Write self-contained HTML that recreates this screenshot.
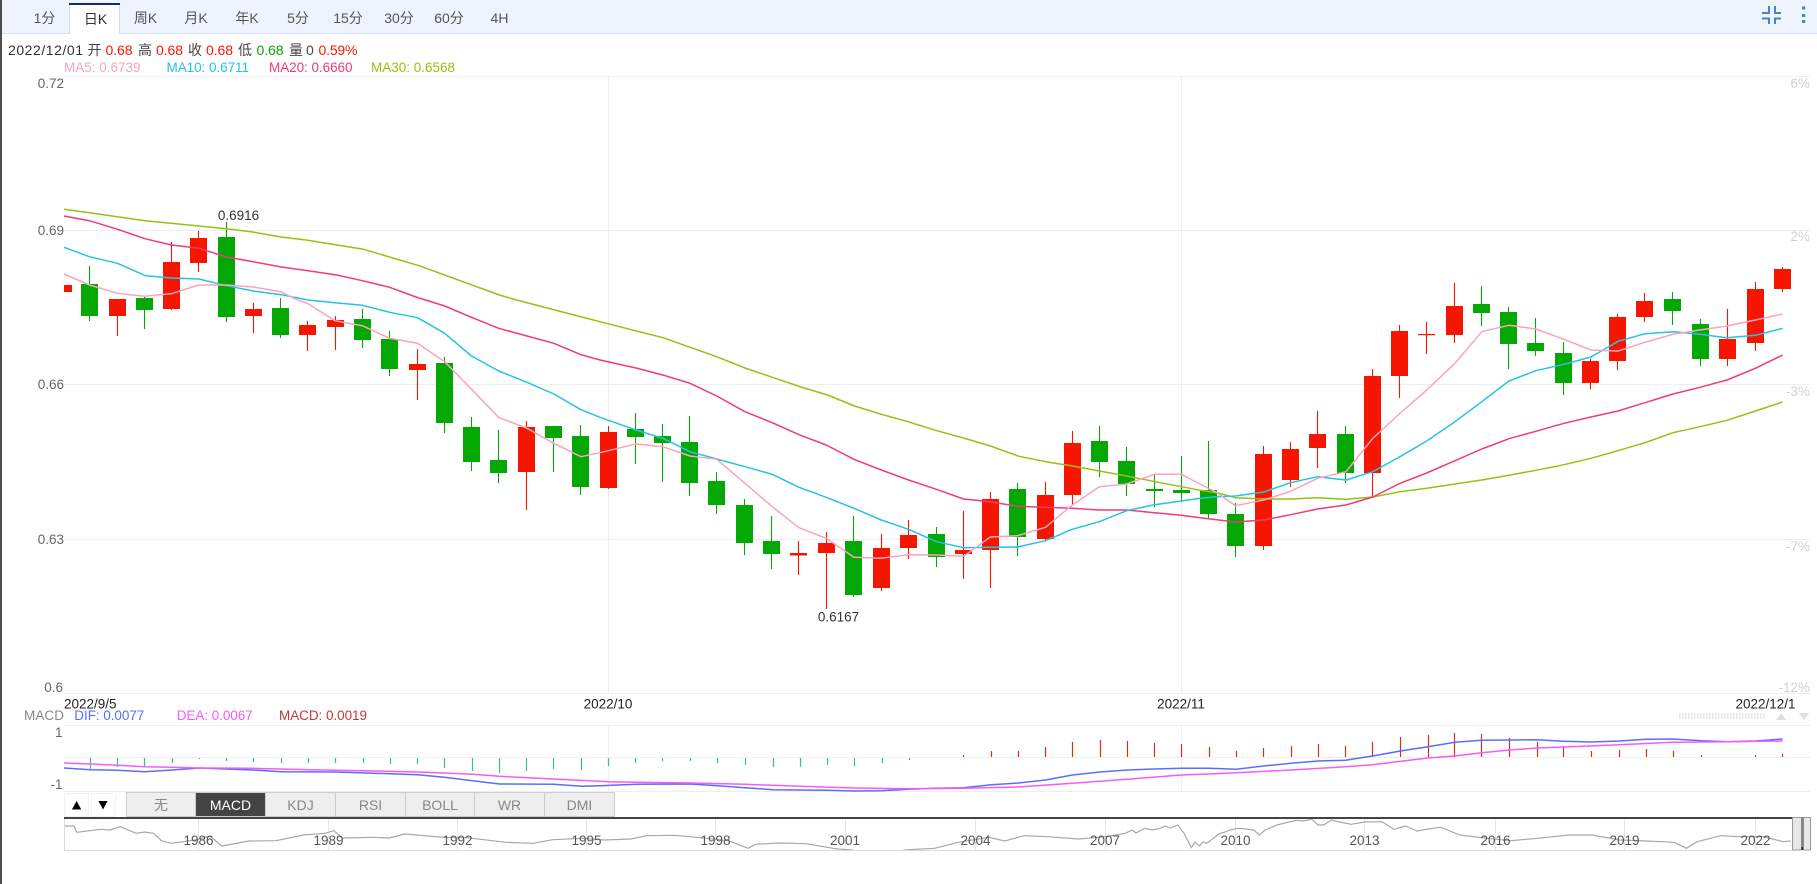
<!DOCTYPE html>
<html>
<head>
<meta charset="utf-8">
<style>
html,body{margin:0;padding:0;background:#fff;width:1817px;height:884px;overflow:hidden}
svg{display:block;font-family:"Liberation Sans","Noto Sans CJK SC",sans-serif}
</style>
</head>
<body>
<svg width="1817" height="884" viewBox="0 0 1817 884" xmlns="http://www.w3.org/2000/svg">
<rect width="1817" height="884" fill="#fff"/>
<!-- top bar -->
<rect x="0" y="0" width="1817" height="33" fill="#edf4fe"/>
<rect x="0" y="33" width="1817" height="1" fill="#d5dfea"/>
<rect x="69" y="3" width="51" height="31" fill="#fff"/>
<rect x="69" y="5" width="1" height="29" fill="#d5dfea"/>
<rect x="119" y="5" width="1" height="29" fill="#d5dfea"/>
<rect x="69" y="3" width="51" height="2" fill="#0e2a82"/>
<g font-size="14" fill="#555" text-anchor="middle">
<text x="44.5" y="23">1分</text>
<text x="95.5" y="24" fill="#333">日K</text>
<text x="145.5" y="23">周K</text>
<text x="196" y="23">月K</text>
<text x="247" y="23">年K</text>
<text x="298" y="23">5分</text>
<text x="348" y="23">15分</text>
<text x="399" y="23">30分</text>
<text x="449" y="23">60分</text>
<text x="499.5" y="23">4H</text>
</g>
<!-- top-right icons -->
<path d="M1762 13H1769V6M1775 6V13H1781M1762 18.5H1769V24M1775 24V18.5H1781" fill="none" stroke="#4a80cc" stroke-width="2"/>
<path d="M1802 6.5h3.2v3h-3.2zM1802 14h3.2v3h-3.2zM1802 20h3.2v3h-3.2z" fill="#4a80cc"/>
<!-- info row -->
<g font-size="14" fill="#333">
<text x="8" y="55" textLength="75" lengthAdjust="spacing">2022/12/01</text>
<text x="87.5" y="55" fill="#444">开</text>
<text x="105.5" y="55" fill="#f61600" textLength="27">0.68</text>
<text x="138" y="55" fill="#444">高</text>
<text x="156" y="55" fill="#f61600" textLength="27">0.68</text>
<text x="188" y="55" fill="#444">收</text>
<text x="206" y="55" fill="#f61600" textLength="27">0.68</text>
<text x="238" y="55" fill="#444">低</text>
<text x="256.5" y="55" fill="#04a804" textLength="27">0.68</text>
<text x="289" y="55" fill="#444">量</text>
<text x="306" y="55" fill="#444">0</text>
<text x="318.5" y="55" fill="#f61600" textLength="39">0.59%</text>
</g>
<g font-size="13.5">
<text x="64" y="72" fill="#fba3be" textLength="76.5">MA5: 0.6739</text>
<text x="166.5" y="72" fill="#24c3e6" textLength="82.5">MA10: 0.6711</text>
<text x="269" y="72" fill="#f23a78" textLength="83.5">MA20: 0.6660</text>
<text x="371" y="72" fill="#9abf12" textLength="84">MA30: 0.6568</text>
</g>
<!-- grid -->
<path d="M64 76.5H1810M64 230.5H1810M64 384.5H1810M64 539.5H1810M64 693.5H1810M608.5 76V693M1181.5 76V693M64 725.5H1810M64 757.5H1810M64 791.5H1810M608.5 725V791M1181.5 725V791" stroke="#eeeeee" stroke-width="1" fill="none"/>
<!-- left axis -->
<g font-size="13.5" fill="#666" text-anchor="end">
<text x="64" y="88">0.72</text>
<text x="64" y="235">0.69</text>
<text x="64" y="389">0.66</text>
<text x="64" y="544">0.63</text>
<text x="63" y="692">0.6</text>
<text x="62.5" y="737">1</text>
<text x="62.5" y="789">-1</text>
</g>
<!-- right axis -->
<g font-size="13.5" fill="#d0d0d0" text-anchor="end">
<text x="1810" y="88">6%</text>
<text x="1810" y="241">2%</text>
<text x="1810" y="396">-3%</text>
<text x="1810" y="551">-7%</text>
<text x="1810" y="692">-12%</text>
</g>
<!-- wicks green -->
<path fill="none" stroke="#04a804" stroke-width="1.1" d="M89.5 266V321M144.5 296V329M226.5 222V322M280.5 298V338M362.5 309V348M389.5 331V376M444.5 357V433M471.5 417V471M498.5 430V483M553.5 426V472M580.5 425V495M635.5 413V464M662.5 424V482M689.5 416V496M716.5 472V514M744.5 499V555M771.5 516V569M853.5 516V597M936.5 527V567M1017.5 483V556M1099.5 426V477M1126.5 447V496M1154.5 475V507M1181.5 456V502M1208.5 441V518M1235.5 503V557M1345.5 426V483M1481.5 286V326M1508.5 307V369M1535.5 318V356M1563.5 342V395M1672.5 292V325M1700.5 319V366"/>
<!-- wicks red -->
<path fill="none" stroke="#f61600" stroke-width="1.1" d="M117.5 299V336M171.5 242V310M198.5 231V272M253.5 303V333M307.5 321V351M335.5 316V350M417.5 349V400M526.5 421V510M608.5 426V489M798.5 541V575M826.5 532V609M881.5 534V591M908.5 520V559M963.5 511V579M990.5 492V588M1045.5 482V541M1072.5 431V505M1263.5 446V550M1290.5 442V487M1317.5 411V468M1372.5 369V497M1399.5 325V398M1426.5 322V354M1454.5 283V343M1590.5 359V389M1617.5 314V370M1644.5 293V322M1727.5 309V366M1755.5 282V351M1782.5 267V292"/>
<!-- bodies green -->
<path fill="#04a804" d="M81 284h17v32h-17zM136 298h17v12h-17zM218 237h17v80h-17zM272 308h17v27h-17zM354 319h17v21h-17zM381 339h17v30h-17zM436 363h17v60h-17zM463 427h17v35h-17zM490 460h17v13h-17zM545 426h17v12h-17zM572 436h17v51h-17zM627 429h17v8h-17zM654 436h17v7h-17zM681 442h17v41h-17zM708 481h17v24h-17zM736 505h17v38h-17zM763 541h17v13h-17zM845 541h17v54h-17zM928 534h17v23h-17zM1009 489h17v48h-17zM1091 441h17v21h-17zM1118 461h17v23h-17zM1146 489h17v2h-17zM1173 490h17v3h-17zM1200 490h17v24h-17zM1227 514h17v32h-17zM1337 434h17v39h-17zM1473 304h17v9h-17zM1500 312h17v32h-17zM1527 343h17v8h-17zM1555 353h17v30h-17zM1664 299h17v12h-17zM1692 324h17v35h-17z"/>
<!-- bodies red -->
<path fill="#f61600" d="M64 285h8v7h-8zM109 299h17v17h-17zM163 262h17v47h-17zM190 238h17v25h-17zM245 309h17v7h-17zM299 325h17v10h-17zM327 320h17v7h-17zM409 364h17v6h-17zM518 427h17v45h-17zM600 432h17v56h-17zM790 553h17v2.5h-17zM818 543h17v10h-17zM873 548h17v40h-17zM900 535h17v13h-17zM955 550h17v4h-17zM982 499h17v51h-17zM1037 495h17v44h-17zM1064 443h17v52h-17zM1255 454h17v92h-17zM1282 449h17v31h-17zM1309 434h17v14h-17zM1364 376h17v97h-17zM1391 331h17v45h-17zM1418 334h17v1.2h-17zM1446 306h17v29h-17zM1582 361h17v22h-17zM1609 317h17v44h-17zM1636 301h17v16h-17zM1719 339h17v20h-17zM1747 289h17v54h-17zM1774 269h17v20h-17z"/>
<!-- MA30 -->
<polyline fill="none" stroke="#9abf12" stroke-width="1.5" stroke-linejoin="round" points="64,209.3 89.5,212.7 145,220.7 199,226 226.6,228.7 252.6,232 281,237 306,240 363.6,249.3 419,265.7 499.4,295 516.6,300 581.7,317 600,321.7 663,337.7 716.7,356.7 745,368 801,387 827.7,395 854.5,406 881.3,414.3 908,421.7 936.8,430.7 963.6,438 990.4,446 1019,456.3 1045.8,461.7 1072.6,466 1099.4,471 1126.6,476 1155,481.7 1181.7,486.7 1200,490.3 1217,492.7 1235.4,497.7 1263.7,499 1290.5,499 1317.6,497.7 1346,499.3 1372.8,497 1400,491.7 1426.7,488.3 1455,484 1481.8,480 1509,475.3 1535.8,470.3 1564,464.7 1591,458.3 1618,450.7 1645,442.7 1673,432.7 1700,426.7 1727,420.3 1755.4,411 1782.6,402"/>
<!-- MA20 -->
<polyline fill="none" stroke="#f23a78" stroke-width="1.5" stroke-linejoin="round" points="64,216 89.5,220.7 117.5,229.3 145,238.7 171.4,245 199,248.3 226.6,257 253.3,261.7 281.3,267 308,270.7 336.8,275 362.4,280.7 389.6,287.3 417.5,297.5 444.7,306 471.5,317.3 498.7,328.3 527,336 553.8,343.3 581,354.7 600,360 636,368 662.8,375 690,383.3 716.7,396 745,411.7 772.2,422.7 799,434.7 826.2,445 854,459.3 881.3,470 908.5,480 936.4,489.3 963.6,499 990.4,501.7 1017.5,506.3 1045.5,507.3 1072.2,508.3 1099.4,510 1126.6,510 1154.5,512.7 1181.3,515.3 1200,517.7 1235.4,522 1263.7,520 1290.5,514.7 1317.6,509 1346,505 1372.8,497 1400,483.3 1426.7,473 1455,460.7 1481.8,449 1509,438.7 1535.8,431.3 1564,423.3 1591,417 1618,411 1645,402.7 1673,394 1700,387.3 1727,380 1755.4,368.3 1782.6,355"/>
<!-- MA10 -->
<polyline fill="none" stroke="#24c3e6" stroke-width="1.5" stroke-linejoin="round" points="64,247.3 89.5,256.7 117.5,263.3 145.4,275.7 171.4,278 199,279 226.6,285.7 253.3,291 281.3,294.7 308,300 335,302.7 362.4,305.3 389.6,312.3 417.5,317.7 444.7,333.3 471.5,356 498.7,371 527,382.3 553.8,394 581,409.7 600,417.3 636,430 662.8,438.3 690,451.7 716.7,459 745,466.7 772.2,474.3 799,487.3 826.2,497.3 854,508.3 881.3,520 908.5,529.3 936.4,541.7 963.6,547.7 990.4,547.3 1017.5,547 1045.5,540.7 1072.2,529.3 1099.4,521.7 1126.6,510.7 1154.5,504.7 1181.3,501 1200,498.3 1217,496.7 1235.4,496 1263.7,492 1290.5,482.7 1317.6,476.7 1346,480 1372.8,471.7 1400,456.7 1426.7,441 1455,421.7 1481.8,401.7 1509,381 1535.8,370.7 1564,364.3 1591,357 1618,341.3 1645,333.7 1673,331.7 1700,334.3 1727,337.7 1755.4,335.3 1782.6,328.3"/>
<!-- MA5 -->
<polyline fill="none" stroke="#fba3be" stroke-width="1.5" stroke-linejoin="round" points="64,274 89.5,285 117.5,293.3 144.3,296.3 171.4,293.7 198.6,285 226.6,285 253.3,287 280.5,291.7 297.7,300 307.3,303.3 335,320.7 362.4,325.7 389.6,338.3 417.5,343.3 444.7,361.7 471.5,389.3 498.7,417.3 527,428.3 553.8,443.3 581,456.7 600,452.7 636,444 662.8,446.7 690,456 716.7,459.3 745,483.3 772.2,506.7 799,527.7 826.2,538.3 854,557.3 881.3,558.3 908.5,554.7 936.4,555 963.6,556.3 990.4,537 1017.5,535.7 1045.5,527.3 1072.2,505 1099.4,486.7 1126.6,484 1154.5,474.3 1181.3,474.3 1200,484 1217,492.7 1235.4,505.7 1263.7,500 1290.5,491.3 1317.6,478.3 1346,471.7 1372.8,438.3 1400,413.3 1426.7,390 1455,363.3 1481.8,331.7 1509,325.3 1535.8,329 1564,339.3 1591,350 1618,351 1645,342.3 1673,334.3 1700,330 1727,326 1755.4,320 1782.6,314"/>
<!-- high/low labels -->
<text x="238.5" y="220" font-size="13.5" fill="#333" text-anchor="middle">0.6916</text>
<text x="838.5" y="621.5" font-size="13.5" fill="#333" text-anchor="middle">0.6167</text>
<!-- date axis -->
<g font-size="13.5" fill="#222">
<text x="64" y="708.5">2022/9/5</text>
<text x="608" y="708.5" text-anchor="middle">2022/10</text>
<text x="1181" y="708.5" text-anchor="middle">2022/11</text>
<text x="1795.5" y="708.5" text-anchor="end">2022/12/1</text>
</g>
<!-- dotted scrollbar & arrows -->
<path d="M1679 714.5H1766M1679 717.5H1766" stroke="#dcdcdc" stroke-width="2" stroke-dasharray="1.5 1.5" fill="none"/>
<polygon points="1781,713 1786,720 1776,720" fill="#dedede"/>
<polygon points="1799,713 1809,713 1804,720" fill="#dedede"/>
<!-- MACD legend -->
<g font-size="13.5">
<text x="24" y="720" fill="#888" textLength="40">MACD</text>
<text x="74.3" y="720" fill="#5a6dff" textLength="70">DIF: 0.0077</text>
<text x="176.7" y="720" fill="#f55cf5" textLength="76">DEA: 0.0067</text>
<text x="279" y="720" fill="#c03a3a" textLength="88">MACD: 0.0019</text>
</g>
<!-- histogram -->
<path fill="none" stroke="#2fc09c" stroke-width="1.2" d="M90.5 758V769M117.5 758V767M144.5 758V767M172.5 758V763M199.5 758V759M226.5 758V761M253.5 758V762M281.5 758V763M308.5 758V763M335.5 758V763M363.5 758V763M390.5 758V764M417.5 758V764M444.5 758V768M472.5 758V771M499.5 758V773M526.5 758V771M553.5 758V769M581.5 758V770M608.5 758V766M635.5 758V763M662.5 758V761M690.5 758V761M717.5 758V763M745.5 758V765M773.5 758V767M800.5 758V767M827.5 758V765M854.5 758V766M882.5 758V763M909.5 758V760"/>
<path fill="none" stroke="#c9341c" stroke-width="1.2" d="M963.5 755V757M991.5 751V757M1018.5 751V757M1045.5 747V757M1072.5 742V757M1100.5 740V757M1127.5 741V757M1154.5 743V757M1181.5 744V757M1209.5 747V757M1236.5 751V757M1263.5 748V757M1291.5 746V757M1318.5 744V757M1345.5 746V757M1372.5 742V757M1400.5 737V757M1428.5 735V757M1454.5 733V757M1481.5 734V757M1509.5 738V757M1537.5 742V757M1563.5 746V757M1591.5 751V757M1619.5 750V757M1646.5 749V757M1673.5 751V757M1701.5 755V757M1755.5 755V757M1782.5 754V757"/>
<!-- DIF -->
<polyline fill="none" stroke="#5a6dff" stroke-width="1.5" points="64,768 90.3,769.7 117.5,770.3 144.4,771.7 172.4,770 199.6,768 226.5,769 253.3,770 281.3,771.7 335.4,772 390.3,773.7 417.5,774.7 444.4,777.3 472.4,780.7 499.6,784 553.7,784.3 581.7,786.3 600,785.7 635.8,784.3 690.7,784 717.9,785.7 745,787.7 773,789.7 800.4,790 827.6,790.3 854,791 882,790.7 909.3,789.3 936.2,788.3 963.4,787.7 991.4,784.7 1018.3,783 1045.5,780 1072.4,775 1100,772 1127.2,770 1154.5,769 1181.3,768.3 1209.3,768.3 1236.2,769.3 1263.4,766 1291.4,763.3 1318.3,761 1345.5,760.3 1372.4,756 1400.4,751 1428,746.7 1454.9,742.3 1481.7,740.3 1509.7,740 1537,739.7 1563.8,741.3 1591,742 1619.5,741 1646.3,739.3 1673.1,739 1701.2,740.7 1728.4,741.7 1755.6,741 1782.5,739"/>
<!-- DEA -->
<polyline fill="none" stroke="#f55cf5" stroke-width="1.5" points="64,763 90.3,764 117.5,765.3 144.4,766.7 172.4,767.3 199.6,768 253.3,768.3 308.6,769.7 363.4,770.7 417.5,772 444.4,773 472.4,774.3 499.6,776.3 553.7,779 609,781.7 635.8,782.3 690.7,783 745,784.3 800.4,786.3 854,788 909.3,788.7 963.4,788.3 1018.3,787 1072.4,783.3 1127.2,779.3 1181.3,775 1209.3,774 1236.2,772.7 1291.4,770 1345.5,766.7 1372.4,764.7 1428,758 1454.9,756 1481.7,752.7 1509.7,750 1537,748 1563.8,747 1619.5,744.7 1673.1,742.3 1728.4,741.7 1782.5,741"/>
<!-- indicator buttons -->
<rect x="64.5" y="793.5" width="24" height="23" fill="#fff" stroke="#f2f2f2"/>
<rect x="91.5" y="793.5" width="24" height="23" fill="#fff" stroke="#f2f2f2"/>
<polygon points="76.6,801 81.3,809.5 71.9,809.5" fill="#000"/>
<polygon points="98.4,801 107.6,801 103,809.5" fill="#000"/>
<g stroke="#cccccc" fill="#eeeeee">
<rect x="126.5" y="792.5" width="69" height="24"/>
<rect x="265.5" y="792.5" width="70" height="24"/>
<rect x="335.5" y="792.5" width="70" height="24"/>
<rect x="405.5" y="792.5" width="69" height="24"/>
<rect x="474.5" y="792.5" width="70" height="24"/>
<rect x="544.5" y="792.5" width="70" height="24"/>
</g>
<rect x="195.5" y="792.5" width="70" height="24" fill="#444" stroke="#ccc"/>
<g font-size="14" fill="#888" text-anchor="middle">
<text x="161" y="810">无</text>
<text x="230.5" y="810" fill="#fff">MACD</text>
<text x="300.5" y="810">KDJ</text>
<text x="370.5" y="810">RSI</text>
<text x="440" y="810">BOLL</text>
<text x="509.5" y="810">WR</text>
<text x="579.5" y="810">DMI</text>
</g>
<!-- overview -->
<path d="M198.5 819V850M328.5 819V850M457.5 819V850M586.5 819V850M715.5 819V850M845.5 819V850M975.5 819V850M1105.5 819V850M1235.5 819V850M1364.5 819V850M1495.5 819V850M1624.5 819V850M1755.5 819V850" stroke="#e6e6e6" fill="none"/>
<polyline fill="none" stroke="#a8a8a8" stroke-width="1.2" stroke-linejoin="round" points="64,826 74,826 76.7,832.3 101,829.3 110,830 120.6,826.7 136,833.3 145,832 153.7,833.3 161.5,840.7 171,843.3 183,841.7 195,840 210,836 221.8,846 249,841 276,840.7 303.5,835 325,833.3 333.8,830.7 342.4,838 373.5,837.3 389,838 404.7,834 443.6,837.3 467,837.7 505.8,842.3 533,843.3 552.5,839.7 583.7,838.3 604,840 631,839 646.7,835.7 674,835.3 697,837.3 728.4,840.7 747.9,848.3 755.6,844.3 779,843 806,843.7 837.4,849 853,850"/>
<polyline fill="none" stroke="#a8a8a8" stroke-width="1.2" stroke-linejoin="round" points="903.5,850 934.6,848.3 958,842.3 989,837.3 1004.7,841 1024,835.7 1047.5,836.7 1078.6,839 1105.8,836.7 1125.3,833.3 1132,830 1136,833 1144.7,828.3 1152,830 1160.3,828.3 1165,826 1170,828 1177.8,825 1183.7,832.7 1191.4,847.7 1195,842 1199.2,846 1203,842 1207,843.3 1218.7,834 1225,832 1230,830 1238,828.3 1246,829 1253.7,830 1259.5,835 1265,830 1277,825 1285,823 1296.5,820.3 1303,821 1312,819.3 1318,825 1323.7,825 1331.5,820 1340,822 1351,824.3 1365,822 1382,821.7 1393.8,829.3 1405.4,826 1417,831 1428,829 1440.5,827.3 1460,835 1487,838.3 1510.5,840.7 1537.7,838.3 1569,835 1592,835 1619.5,840 1646.7,841 1674,842.3 1686.4,848.3 1697.3,841.7 1720.6,835.7 1740,836.7 1763.4,836.7 1783,841.7 1790.7,841"/>
<g font-size="13.5" fill="#555" text-anchor="middle">
<text x="198.5" y="845">1986</text>
<text x="328.5" y="845">1989</text>
<text x="457.5" y="845">1992</text>
<text x="586.5" y="845">1995</text>
<text x="715.5" y="845">1998</text>
<text x="845" y="845">2001</text>
<text x="975.5" y="845">2004</text>
<text x="1105" y="845">2007</text>
<text x="1235.5" y="845">2010</text>
<text x="1364.5" y="845">2013</text>
<text x="1495.5" y="845">2016</text>
<text x="1624.5" y="845">2019</text>
<text x="1755.5" y="845">2022</text>
</g>
<rect x="64" y="817" width="1728" height="2" fill="#444"/>
<path d="M64.5 819V850.5H1792" stroke="#dddddd" fill="none"/>
<!-- handle -->
<rect x="1792.5" y="817.5" width="9" height="32.5" fill="#e8e8e8" stroke="#999"/>
<rect x="1803.5" y="817.5" width="7" height="32.5" fill="#e8e8e8" stroke="#999"/>
<rect x="1801" y="817" width="3" height="33" fill="#888"/>
<rect x="1801.5" y="847" width="1.5" height="3" fill="#222"/>
<!-- left strip -->
<rect x="0" y="0" width="2" height="884" fill="#4d4d4d"/>
</svg>
</body>
</html>
